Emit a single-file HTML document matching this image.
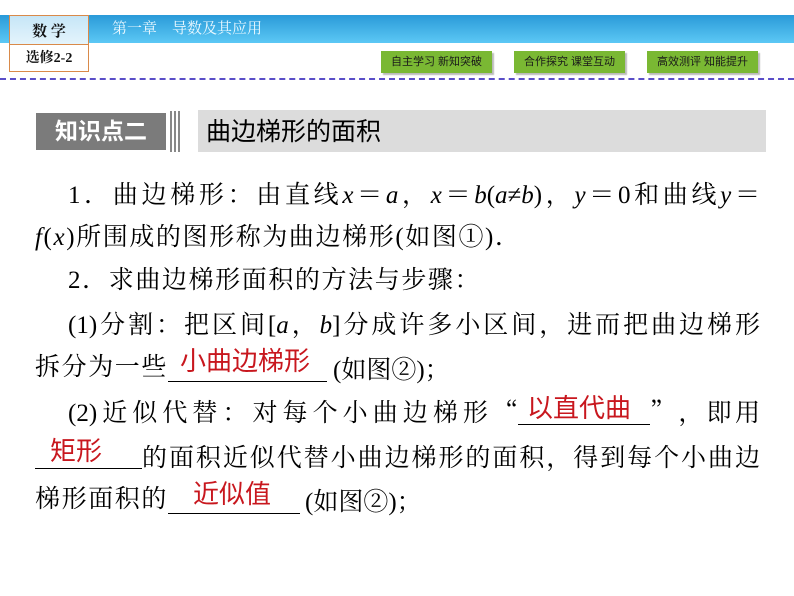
<!DOCTYPE html>
<html><head><meta charset="utf-8"><style>
body{margin:0;width:794px;height:596px;background:#fff;position:relative;overflow:hidden;font-family:"Liberation Serif","Noto Serif CJK SC",serif;text-spacing-trim:space-all;}
.a{position:absolute}
.topbar{left:0;top:15px;width:794px;height:28px;background:linear-gradient(#2a9ad8,#5cc8f5);}
.box{left:9px;top:15px;width:80px;height:57px;border:1px solid #d98a4a;box-sizing:border-box;background:#fff}
.box .t{height:28px;background:linear-gradient(#c6e6f7,#e4f4fc);border-bottom:1px solid #d98a4a;text-align:center;font-size:15px;line-height:32px;font-weight:bold;color:#111}
.box .b{text-align:center;font-size:14px;line-height:28px;font-weight:bold;color:#111}
.chap{left:112px;top:15px;font-size:15px;line-height:28px;color:#eaf8ff;}
.dash{left:0;top:78px;width:794px;border-top:2px dashed #5a4ec8;}
.btn{top:51px;height:22px;width:111px;background:#7ab833;box-shadow:2px 2px 1px #bbb;font-family:"Liberation Sans","Noto Sans CJK SC",sans-serif;font-size:11px;line-height:22px;text-align:center;color:#1a1a1a}
.h1{left:36px;top:113px;width:130px;height:37px;background:#7b7b7b;color:#fff;font-family:"Liberation Sans","Noto Sans CJK SC",sans-serif;font-weight:bold;font-size:23px;line-height:37px;text-align:center}
.bar{top:111px;width:2px;height:41px;background:#888}
.h2{left:198px;top:110px;width:568px;height:42px;background:#dcdcdc;font-family:"Liberation Sans","Noto Sans CJK SC",sans-serif;font-size:25px;line-height:44px;color:#000;padding-left:8px;box-sizing:border-box}
.l{position:absolute;font-size:25px;line-height:30px;height:30px;color:#000;white-space:nowrap;letter-spacing:1.6px}
.j{text-align:justify;text-align-last:justify;letter-spacing:0}
.c{font-family:"Noto Serif CJK SC",serif}
.u{position:absolute;border-bottom:1px solid #000;height:1px}
.r{position:absolute;color:#c8171e;font-size:26px;line-height:30px;white-space:nowrap;font-family:"Liberation Sans","Noto Sans CJK SC",sans-serif}
i{font-style:italic}
</style></head><body>
<div class="a topbar"></div>
<div class="a box"><div class="t">数 学</div><div class="b">选修2-2</div></div>
<div class="a chap">第一章　导数及其应用</div>
<div class="a dash"></div>
<div class="a btn" style="left:381px">自主学习 新知突破</div>
<div class="a btn" style="left:514px">合作探究 课堂互动</div>
<div class="a btn" style="left:647px">高效测评 知能提升</div>
<div class="a h1">知识点二</div>
<div class="a bar" style="left:170px"></div><div class="a bar" style="left:174px"></div><div class="a bar" style="left:178px"></div>
<div class="a h2">曲边梯形的面积</div>

<div class="l j" style="left:68px;top:178px;width:692px">1<span class="c">．</span>曲边梯形<span class="c">：</span>由直线<i>x</i><span class="c">＝</span><i>a</i><span class="c">，</span><i>x</i><span class="c">＝</span><i>b</i>(<i>a</i>≠<i>b</i>)<span class="c">，</span><i>y</i><span class="c">＝</span>0和曲线<i>y</i><span class="c">＝</span></div>
<div class="l" style="left:35px;top:220px"><i>f</i>(<i>x</i>)所围成的图形称为曲边梯形(如图①)<span class="c">．</span></div>
<div class="l" style="left:68px;top:263px">2<span class="c">．</span>求曲边梯形面积的方法与步骤<span class="c">：</span></div>
<div class="l j" style="left:68px;top:308px;width:692px">(1)分割<span class="c">：</span>把区间[<i>a</i><span class="c">，</span><i>b</i>]分成许多小区间<span class="c">，</span>进而把曲边梯形</div>

<div class="l" style="left:35px;top:353px">拆分为一些</div>
<div class="u" style="left:168px;top:380px;width:159px"></div>
<div class="r" style="left:180px;top:346px">小曲边梯形</div>
<div class="l" style="left:333px;top:353px;letter-spacing:0">(如图②)<span class="c">；</span></div>

<div class="l j" style="left:68px;top:396px;width:450px">(2)近似代替<span class="c">：</span>对每个小曲边梯形<span class="c">“</span></div>
<div class="u" style="left:518px;top:423px;width:132px"></div>
<div class="r" style="left:527px;top:393px">以直代曲</div>
<div class="l j" style="left:650px;top:396px;width:110px"><span class="c">”，</span>即用</div>

<div class="u" style="left:35px;top:467px;width:107px"></div>
<div class="r" style="left:50px;top:436px">矩形</div>
<div class="l j" style="left:142px;top:441px;width:618px">的面积近似代替小曲边梯形的面积<span class="c">，</span>得到每个小曲边</div>

<div class="l" style="left:35px;top:485px">梯形面积的</div>
<div class="u" style="left:168px;top:512px;width:132px"></div>
<div class="r" style="left:193px;top:479px">近似值</div>
<div class="l" style="left:305px;top:485px;letter-spacing:0">(如图②)<span class="c">；</span></div>
</body></html>
